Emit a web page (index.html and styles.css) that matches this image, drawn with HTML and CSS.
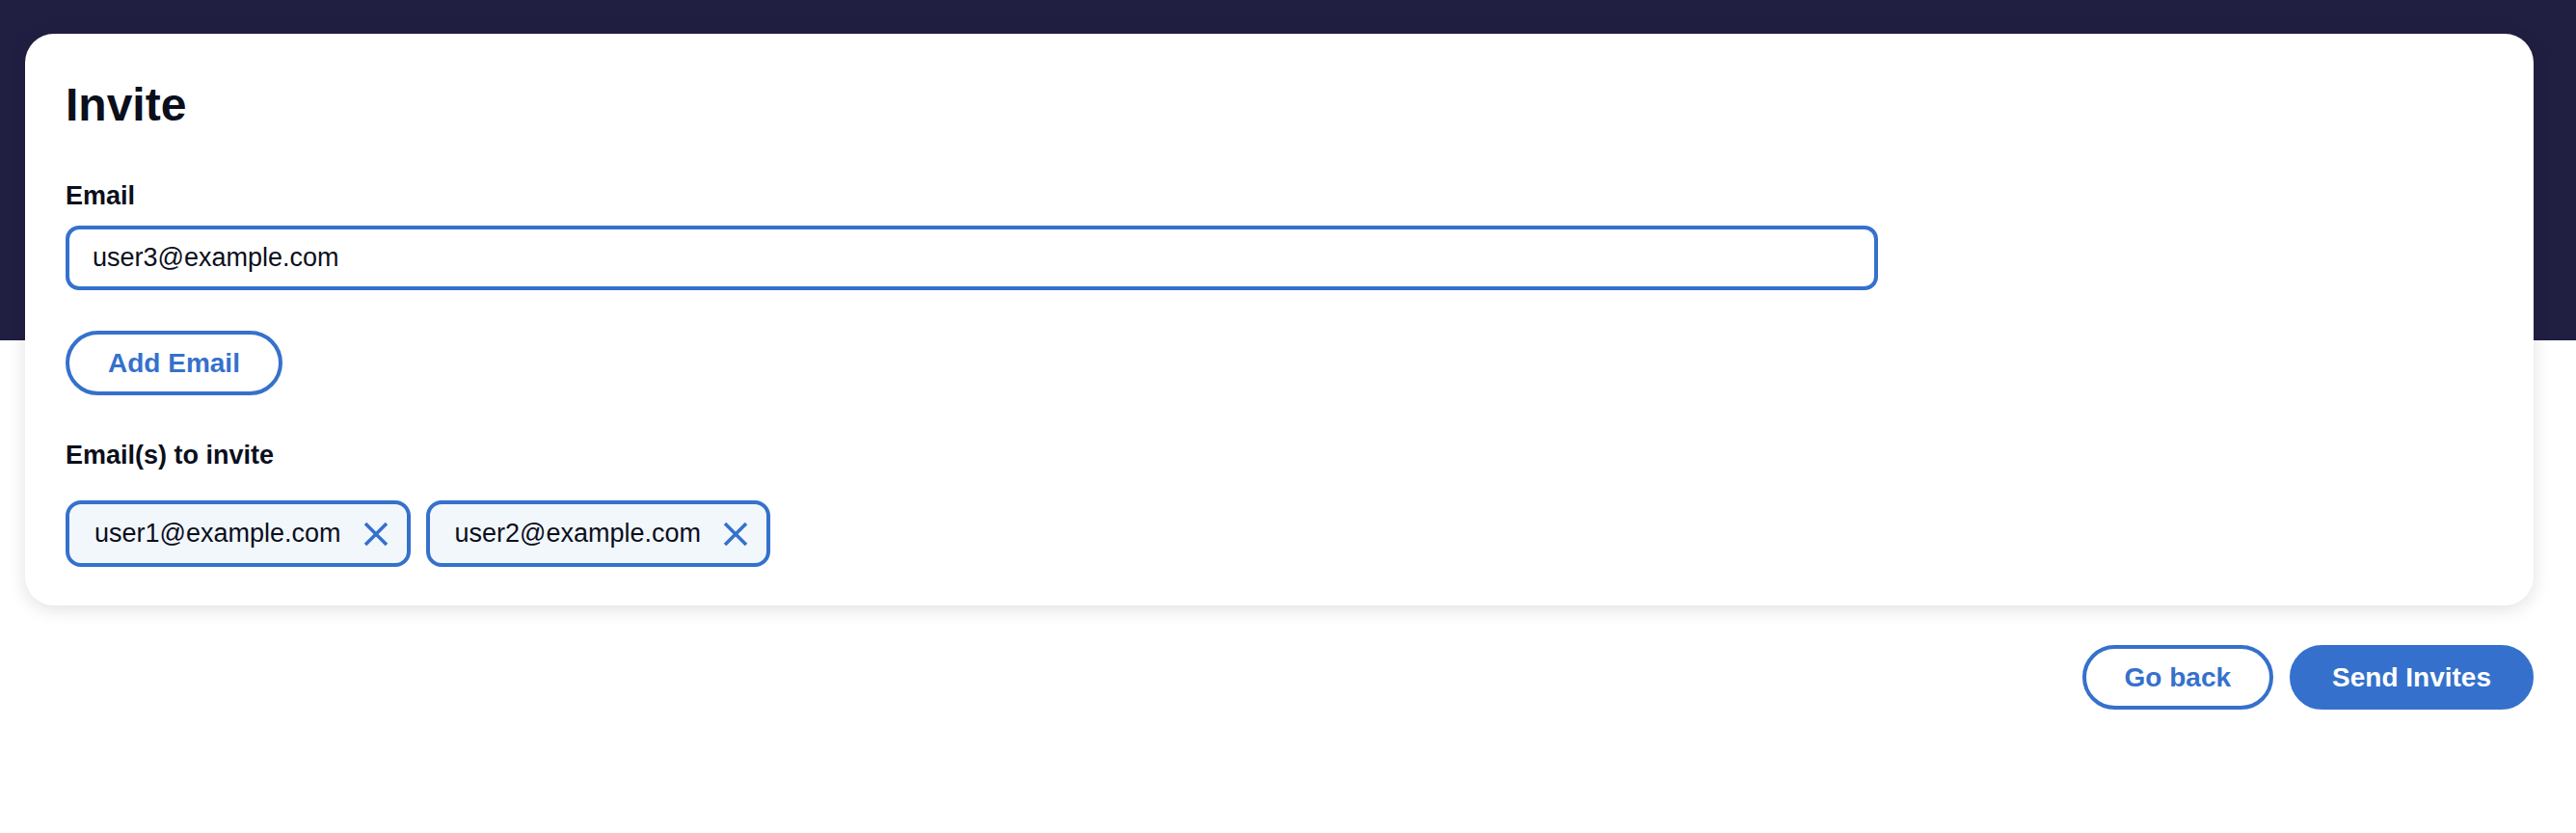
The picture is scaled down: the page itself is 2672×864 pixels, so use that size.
FILE: index.html
```html
<!DOCTYPE html>
<html lang="en">
<head>
<meta charset="utf-8">
<title>Invite</title>
<link rel="stylesheet" href="styles.css">
</head>
<body>
<main class="page">
  <section class="card">
    <h1 class="title">Invite</h1>
    <label class="label label-email" for="email">Email</label>
    <input class="input" id="email" type="text" value="user3@example.com">
    <div class="add-row">
      <button class="btn btn-outline" type="button">Add Email</button>
    </div>
    <div class="label label-list">Email(s) to invite</div>
    <div class="chips">
      <div class="chip">
        <span class="chip-text">user1@example.com</span>
        <svg class="chip-x" viewBox="0 0 26 26" width="26" height="26" aria-hidden="true"><path d="M2 2 L24 24 M24 2 L2 24" stroke="#3571cc" stroke-width="3.6" fill="none"/></svg>
      </div>
      <div class="chip">
        <span class="chip-text">user2@example.com</span>
        <svg class="chip-x" viewBox="0 0 26 26" width="26" height="26" aria-hidden="true"><path d="M2 2 L24 24 M24 2 L2 24" stroke="#3571cc" stroke-width="3.6" fill="none"/></svg>
      </div>
    </div>
  </section>
  <div class="actions">
    <button class="btn btn-outline btn-back" type="button">Go back</button>
    <button class="btn btn-primary" type="button">Send Invites</button>
  </div>
</main>
</body>
</html>
```
FILE: styles.css
```css
html, body {
  margin: 0;
  padding: 0;
}
body {
  background: linear-gradient(#201f42 0, #201f42 353px, #ffffff 353px);
  min-height: 864px;
  font-family: "Liberation Sans", Arial, Helvetica, sans-serif;
  color: #0b0f1c;
}
.page {
  padding: 35px 44px 0 26px;
}
.card {
  background: #ffffff;
  border-radius: 30px;
  box-shadow: 0 4px 18px rgba(20, 24, 40, 0.13);
  padding: 45px 42px 40px 42px;
  display: flex;
  flex-direction: column;
  align-items: flex-start;
}
.title {
  margin: 0;
  font-size: 48px;
  line-height: 58px;
  font-weight: 700;
  color: #0b0f1c;
}
.label {
  display: block;
  font-size: 27px;
  line-height: 32px;
  font-weight: 700;
  color: #0b0f1c;
}
.label-email {
  margin-top: 49px;
}
.input {
  box-sizing: border-box;
  margin-top: 15px;
  width: 1880px;
  height: 67px;
  border: 4px solid #3571cc;
  border-radius: 14px;
  padding: 0 24px;
  font-family: "Liberation Sans", Arial, Helvetica, sans-serif;
  font-size: 27px;
  color: #0b0f1c;
  background: #ffffff;
  outline: none;
}
.add-row {
  margin-top: 42px;
  display: flex;
}
.btn {
  box-sizing: border-box;
  height: 67px;
  padding: 0 40px;
  border-radius: 34px;
  border: 4px solid #3571cc;
  font-family: "Liberation Sans", Arial, Helvetica, sans-serif;
  font-size: 28px;
  font-weight: 700;
  cursor: pointer;
  display: inline-flex;
  align-items: center;
  justify-content: center;
}
.btn-outline {
  background: #ffffff;
  color: #3571cc;
}
.btn-primary {
  background: #3571cc;
  color: #ffffff;
}
.label-list {
  margin-top: 46px;
}
.chips {
  margin-top: 31px;
  display: flex;
  gap: 16px;
}
.chip {
  box-sizing: border-box;
  height: 69px;
  display: flex;
  align-items: center;
  gap: 23px;
  padding: 0 19px 0 26px;
  border: 4px solid #3571cc;
  border-radius: 16px;
  background: #f2f7fc;
}
.chip-text {
  font-size: 27px;
  color: #0b0f1c;
}
.chip-x {
  display: block;
  flex: none;
}
.actions {
  margin-top: 41px;
  display: flex;
  justify-content: flex-end;
  gap: 17px;
}
```
